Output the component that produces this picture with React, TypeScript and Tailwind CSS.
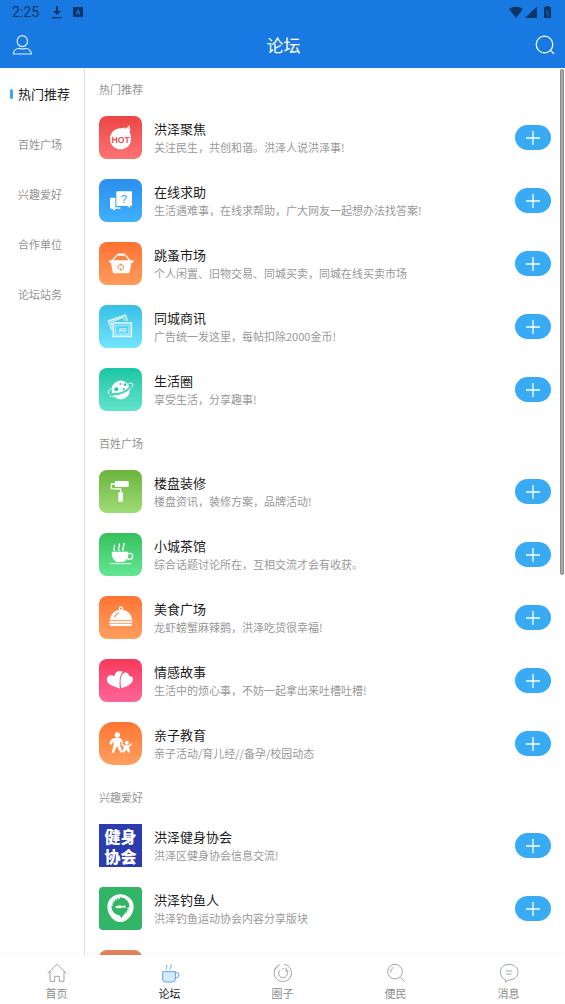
import { useState } from 'react';
import type { ReactNode } from 'react';
import { clsx } from 'clsx';

// ─── Types ─────────────────────────────────────────────────

interface Forum {
  title: string;
  desc: string;
  /** Tile background and corner classes */
  tile: string;
  icon: ReactNode;
}

interface Section {
  name: string;
  forums: Forum[];
}

// ─── Forum glyphs (129 unit grid) ──────────────────────────

function Glyph({ children }: { children: ReactNode }) {
  return (
    <svg viewBox="0 0 129 129" className="h-full w-full" fill="#fff" aria-hidden="true">
      {children}
    </svg>
  );
}

const hotGlyph = (
  <Glyph>
    <path d="M33 69c0-18 14-32 32-32 6 0 9-1 11-4 1 2 1 3 0 5 6-1 11-4 15-11 2 6 1 9-1 13l4-3c0 5-1 8-2 11 3 6 4 13 4 21 0 18-14 31-31 31S33 87 33 69Z" />
    <text x="65" y="80" textAnchor="middle" fontSize="26" fontWeight="700" fill="#ef5052" fontFamily="Liberation Sans, sans-serif">HOT</text>
  </Glyph>
);

const helpGlyph = (
  <Glyph>
    <path d="M36 56h13v29h15v4H50l-6 6-3-6h-5q-3 0-3-3V59q0-3 3-3Z" />
    <path d="M55 37h41q3 0 3 3v38q0 3-3 3h-4l2 7-9-7H55q-3 0-3-3V40q0-3 3-3Z" />
    <text x="75" y="71" textAnchor="middle" fontSize="34" fill="#2f97f3" fontFamily="Liberation Sans, sans-serif">?</text>
  </Glyph>
);

const basketGlyph = (
  <Glyph>
    <path d="M39 57 53 40M93 57 80 40" stroke="#fff" strokeWidth="4" />
    <path d="M58 38h18" stroke="#fff" strokeWidth="7" strokeLinecap="round" />
    <path d="M32 55h70q2 0 2 3t-3 4h-4l-5 28q-1 4-5 4H46q-4 0-5-4l-5-28h-3q-3 0-3-4t2-3Z" />
    <path d="M59 81a8 8 0 0 1 8-13M72 70a8 8 0 0 1-8 13M65 65l4 3-4 4M66 86l-4-3 4-4" stroke="#ff8446" strokeWidth="3" fill="none" />
  </Glyph>
);

const adGlyph = (
  <Glyph>
    <g fill="none" stroke="#e9fbff">
      <path d="M39 75 28 48l51-18 7 18" strokeWidth="4" />
      <path d="M41 65 35 51l39-14 4 11" strokeWidth="3" />
      <path d="M43 54h54v40H43Z" strokeWidth="5" />
      <path d="M50 61h40v26H50Z" strokeWidth="2" />
    </g>
    <text x="70" y="80" textAnchor="middle" fontSize="17" fontWeight="700" fill="#e9fbff" fontFamily="Liberation Sans, sans-serif">AD</text>
  </Glyph>
);

const planetGlyph = (
  <Glyph>
    <path d="M91 56a27 27 0 1 0-52 19c19 2 39-5 52-19ZM43 82a27 27 0 0 0 49-17C79 77 62 84 43 82Z" />
    <path d="M35 61c-9 9-10 14-4 17M90 46c9-2 13 0 11 6-3 9-15 19-28 25-17 8-32 11-39 8" fill="none" stroke="#fff" strokeWidth="3" strokeLinecap="round" />
    <g fill="#1fcaa8">
      <circle cx="52" cy="64" r="6" />
      <circle cx="74" cy="63" r="3" />
      <circle cx="64" cy="48" r="3" />
      <circle cx="78" cy="50" r="4" />
    </g>
  </Glyph>
);

const rollerGlyph = (
  <Glyph>
    <rect x="48" y="33" width="41" height="18" rx="3" />
    <path d="M48 42H37v14l28 1v12" fill="none" stroke="#fff" strokeWidth="4" strokeLinejoin="round" />
    <rect x="58" y="67" width="14" height="28" rx="3" />
  </Glyph>
);

const cupGlyph = (
  <Glyph>
    <path d="M38 56h50q2 22-14 31H53Q37 78 38 56Z" />
    <circle cx="92" cy="70" r="9" fill="none" stroke="#fff" strokeWidth="4" />
    <path d="M33 92h63" stroke="#fff" strokeWidth="3" />
    <path d="M47 53c-7-7 3-8-1-16M60 53c-7-8 5-11 1-20M73 52c-7-8 5-11 2-21" fill="none" stroke="#fff" strokeWidth="4" strokeLinecap="round" />
  </Glyph>
);

const dishGlyph = (
  <Glyph>
    <circle cx="66" cy="38" r="5" fill="none" stroke="#fff" strokeWidth="4" />
    <path d="M32 73c3-20 16-32 34-32s31 12 34 32Z" />
    <path d="M47 62q4-8 12-11" stroke="#ff8b45" strokeWidth="4" strokeLinecap="round" fill="none" />
    <path d="M30 76h71q0 6-5 6H35q-5 0-5-6ZM31 84h69q-1 6-5 6H36q-4 0-5-6Z" />
  </Glyph>
);

const heartsGlyph = (
  <Glyph>
    <path d="M63 89C55 83 27 81 24 65c-3-15 12-20 22-13 2-14 15-19 25-14-9 10-11 33-8 51Z" />
    <path d="M67 88c-4-16-3-33 3-42 7-9 20-6 21 6 7-2 12 3 11 9-2 15-18 22-35 27Z" />
  </Glyph>
);

const familyGlyph = (
  <Glyph>
    <circle cx="55" cy="39" r="8" />
    <path d="M46 48h17c5 3 7 7 9 14l-4 3-5-8v12l7 20-5 4-11-21-10 21h-6l6-27-1-9-5 11-7-3c2-9 7-15 15-17Z" />
    <circle cx="83" cy="62" r="6" />
    <path d="M66 64 78 70h9l11-7 2 4-10 8 3 15-5 2-6-8-8 8-5-2 6-15-10-8Z" />
  </Glyph>
);

const fishingGlyph = (
  <Glyph>
    <path d="M64 22c-22 0-39 17-39 37 0 21 17 46 39 46s40-25 40-46c0-20-18-37-40-37Z" />
    <circle cx="64" cy="58" r="27" fill="#32b566" />
    <path d="M38 57a26 26 0 0 1 26-24M89 62a26 26 0 0 1-25 24" fill="none" stroke="#fff" strokeWidth="6" strokeDasharray="5 3" />
    <path d="M58 80 80 76 67 93Z" fill="#32b566" />
    <path d="M47 60c9-6 20-6 25-2l8-4-2 5 4 5-10-3c-7 4-17 4-25-1Z" />
  </Glyph>
);

const fitnessGlyph = (
  <span className="flex h-full flex-col items-center justify-center text-base/5 font-black text-white" aria-hidden="true">
    <span>健身</span>
    <span>协会</span>
  </span>
);

// ─── Data ──────────────────────────────────────────────────

const SECTIONS: Section[] = [
  {
    name: '热门推荐',
    forums: [
      { title: '洪泽聚焦', desc: '关注民生，共创和谐。洪泽人说洪泽事!', tile: 'rounded-lg bg-linear-to-b from-[#ea4543] to-[#ff7275]', icon: hotGlyph },
      { title: '在线求助', desc: '生活遇难事，在线求帮助，广大网友一起想办法找答案!', tile: 'rounded-lg bg-linear-to-b from-[#2b8fee] to-[#3fb0ff]', icon: helpGlyph },
      { title: '跳蚤市场', desc: '个人闲置、旧物交易、同城买卖，同城在线买卖市场', tile: 'rounded-lg bg-linear-to-b from-[#ff7132] to-[#ff9b5c]', icon: basketGlyph },
      { title: '同城商讯', desc: '广告统一发这里，每帖扣除2000金币!', tile: 'rounded-lg bg-linear-to-b from-[#35bfe8] to-[#72e5fb]', icon: adGlyph },
      { title: '生活圈', desc: '享受生活，分享趣事!', tile: 'rounded-lg bg-linear-to-b from-[#14c6a4] to-[#5fe4ca]', icon: planetGlyph },
    ],
  },
  {
    name: '百姓广场',
    forums: [
      { title: '楼盘装修', desc: '楼盘资讯，装修方案，品牌活动!', tile: 'rounded-lg bg-linear-to-b from-[#69b53c] to-[#a0dc76]', icon: rollerGlyph },
      { title: '小城茶馆', desc: '综合话题讨论所在，互相交流才会有收获。', tile: 'rounded-lg bg-linear-to-b from-[#35c05c] to-[#62e892]', icon: cupGlyph },
      { title: '美食广场', desc: '龙虾螃蟹麻辣鹅，洪泽吃货很幸福!', tile: 'rounded-lg bg-linear-to-b from-[#ff7432] to-[#ff9f60]', icon: dishGlyph },
      { title: '情感故事', desc: '生活中的烦心事，不妨一起拿出来吐槽吐槽!', tile: 'rounded-lg bg-linear-to-b from-[#f73759] to-[#ff6499]', icon: heartsGlyph },
      { title: '亲子教育', desc: '亲子活动/育儿经//备孕/校园动态', tile: 'rounded-[14px] bg-linear-to-b from-[#ff742f] to-[#ff9f5f]', icon: familyGlyph },
    ],
  },
  {
    name: '兴趣爱好',
    forums: [
      { title: '洪泽健身协会', desc: '洪泽区健身协会信息交流!', tile: 'bg-[#2c3cae]', icon: fitnessGlyph },
      { title: '洪泽钓鱼人', desc: '洪泽钓鱼运动协会内容分享版块', tile: 'rounded-sm bg-[#32b566]', icon: fishingGlyph },
      { title: '', desc: '', tile: 'rounded-lg bg-[#e2845c]', icon: null },
    ],
  },
];

const CATEGORIES = ['热门推荐', '百姓广场', '兴趣爱好', '合作单位', '论坛站务'];

const TABS = [
  {
    name: '首页',
    icon: <path d="M2 31 30 4l28 27M9 26v29h14V40h14v15h14V26" />,
  },
  {
    name: '论坛',
    icon: (
      <g stroke="#4293e6">
        <path d="M8 26h38v22q0 9-9 9H17q-9 0-9-9Z" fill="#d7eaff" />
        <path d="M46 29h4q7 0 7 7t-7 8h-4" />
        <path d="M20 20c-5-5 4-8 0-14M32 20c-5-5 5-9 1-16" />
      </g>
    ),
  },
  {
    name: '圈子',
    icon: (
      <>
        <path d="M34 4a26 26 0 1 1-13 1M6 20a26 26 0 0 1 7-9" />
        <path d="M22 21a13 13 0 1 0 17 1M39 14v10h8M28 17h5" />
      </>
    ),
  },
  {
    name: '便民',
    icon: (
      <>
        <circle cx="27" cy="26" r="22" />
        <path d="M14 29q-1-12 9-16M44 44l12 12" />
      </>
    ),
  },
  {
    name: '消息',
    icon: <path d="M20 51 19 57l10-6c16 0 28-9 28-23S46 4 30 4 4 14 4 28c0 11 6 19 16 23ZM20 24h20M22 33h16" />,
  },
];

// ─── Components ────────────────────────────────────────────

function StatusBar() {
  return (
    <div className="flex h-6 items-center px-3 text-[#0b3566]">
      <span className="font-[Roboto,sans-serif] text-sm font-normal">2:25</span>
      <svg viewBox="0 0 12 14" className="ml-3 h-3.5 w-3" fill="currentColor" aria-hidden="true">
        <path d="M5 1h2v5h3L6 10 2 6h3ZM1 12h10v1.2H1Z" />
      </svg>
      <svg viewBox="0 0 10 10" className="ml-2.5 h-2.5 w-2.5" aria-hidden="true">
        <rect width="10" height="10" rx="1" fill="currentColor" />
        <path d="M3 7.6 5 2.6l2 5M3.7 6h2.6" fill="none" stroke="#1779e1" />
      </svg>
      <svg viewBox="0 0 44 14" className="ml-auto h-3.5 w-11" fill="currentColor" aria-hidden="true">
        <path d="M0 4q7-5 14 0L7 13Z" />
        <path d="M16 13 28 1.500V13Z" />
        <path d="M35 2h2V1h3v1h2v11h-7Z" />
        <path d="m39 4-2 4h3l-2 4" stroke="#1779e1" fill="none" strokeWidth=".7" />
      </svg>
    </div>
  );
}

function ForumRow({ forum }: { forum: Forum }) {
  return (
    <li className="flex h-[63px] items-center gap-3">
      <div className={clsx('h-[43px] w-[43px] shrink-0 overflow-hidden', forum.tile)}>{forum.icon}</div>
      <div className="min-w-0 flex-1 pt-0.5">
        <h3 className="truncate text-[13px]/[18px] text-[#1c1c1c]">{forum.title}</h3>
        <p className="truncate text-[11px]/[19px] text-[#999]">{forum.desc}</p>
      </div>
      <button
        type="button"
        aria-label={`关注${forum.title}`}
        className="flex h-[25px] w-9 shrink-0 items-center justify-center rounded-full bg-[#39abf5]"
      >
        <svg viewBox="0 0 14 14" className="h-3.5 w-3.5" stroke="#fff" strokeWidth="1.300" aria-hidden="true">
          <path d="M7 0v14M0 7h14" />
        </svg>
      </button>
    </li>
  );
}

export default function App() {
  const [category, setCategory] = useState(CATEGORIES[0]);
  const [tab, setTab] = useState('论坛');

  return (
    <div className="flex h-dvh flex-col overflow-hidden bg-white font-['Noto_Sans_CJK_SC',sans-serif]">
      <header className="shrink-0 bg-[#1779e1]">
        <StatusBar />
        <div className="flex h-11 items-center justify-between pr-2.5 pb-0.5 pl-3">
          <button type="button" aria-label="我的">
            <svg viewBox="0 0 60 62" className="h-5 w-5" fill="none" stroke="#e3efff" strokeWidth="3.500" aria-hidden="true">
              <ellipse cx="31" cy="19" rx="16" ry="17" />
              <path d="M3 59c0-9 7-17 18-18q10 5 20 0c10 1 18 9 18 18Z" strokeLinejoin="round" />
            </svg>
          </button>
          <h1 className="text-[17px] text-white">论坛</h1>
          <button type="button" aria-label="搜索">
            <svg viewBox="0 0 20 20" className="h-5 w-5" fill="none" stroke="#fff" strokeWidth="1.200" aria-hidden="true">
              <circle cx="9.500" cy="9.500" r="8.300" />
              <path d="m15.300 15.300 3.700 3.500" />
            </svg>
          </button>
        </div>
      </header>

      <div className="relative flex min-h-0 flex-1">
        {/* Categories */}
        <nav className="flex w-[85px] shrink-0 flex-col border-r border-[#e2e2e2] pt-px">
          {CATEGORIES.map((name) => (
            <button
              key={name}
              type="button"
              onClick={() => setCategory(name)}
              className={clsx(
                'flex h-[50px] items-center gap-[5px] pl-2.5 text-left',
                name === category ? 'text-[13px] text-[#1c1c1c]' : 'text-[11px] text-[#949494]',
              )}
            >
              <span className={clsx('h-2.5 w-[3px] rounded-full', name === category && 'bg-[#39abf5]')} />
              {name}
            </button>
          ))}
        </nav>

        {/* Forum list */}
        <main className="min-w-0 flex-1 overflow-y-auto px-3.5 pt-px [scrollbar-width:none]">
          {SECTIONS.map((section) => (
            <section key={section.name} className="pb-0.5">
              <h2 className="flex h-[37px] items-center pt-1 text-[11px] text-[#949494]">{section.name}</h2>
              <ul>
                {section.forums.map((forum) => (
                  <ForumRow key={forum.title} forum={forum} />
                ))}
              </ul>
            </section>
          ))}
        </main>

        <div className="absolute top-px right-px h-[57%] w-1 rounded-full border border-[#8b8b8b] bg-[#a9a9a9]" />
      </div>

      {/* Bottom tabs */}
      <nav className="relative flex h-[49px] shrink-0 bg-white shadow-[0_-3px_3px_rgba(0,0,0,0.02)]">
        {TABS.map((item) => (
          <button
            key={item.name}
            type="button"
            onClick={() => setTab(item.name)}
            className={clsx(
              'flex flex-1 flex-col items-center pt-2 text-[11px]/5',
              item.name === tab ? 'text-[#1c1c1c]' : 'text-[#8c8c8c]',
            )}
          >
            <svg viewBox="0 0 60 60" className="h-5 w-5" fill="none" stroke="#8a929c" strokeWidth="2.500" aria-hidden="true">
              {item.icon}
            </svg>
            {item.name}
          </button>
        ))}
      </nav>
    </div>
  );
}
